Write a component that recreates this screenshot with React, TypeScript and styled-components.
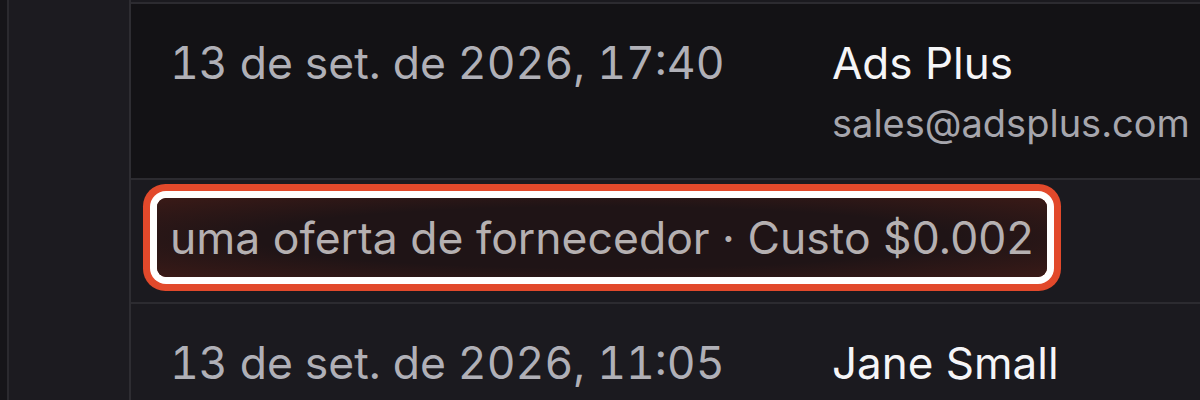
import * as React from "react";
import styled, { createGlobalStyle } from "styled-components";

const GlobalStyle = createGlobalStyle`
  html, body {
    margin: 0;
    padding: 0;
    background: #131215;
  }
  body {
    font-family: Inter, "Noto Sans", sans-serif;
    -webkit-font-smoothing: antialiased;
  }
`;

type Message = {
  date: string;
  name: string;
  email?: string;
  note?: string;
};

const messages: Message[] = [
  {
    date: "13 de set. de 2026, 17:40",
    name: "Ads Plus",
    email: "sales@adsplus.com",
    note: "uma oferta de fornecedor · Custo $0.002",
  },
  {
    date: "13 de set. de 2026, 11:05",
    name: "Jane Small",
  },
];

const App: React.FC = () => {
  return (
    <>
      <GlobalStyle />
      <Page>
        <Gutter />
        <Sidebar />
        <Table>
          {messages.map((m) => (
            <React.Fragment key={m.date}>
              <Row $dark={!!m.email}>
                <DateCell>{m.date}</DateCell>
                <SenderCell>
                  <Name>{m.name}</Name>
                  {m.email && <Email>{m.email}</Email>}
                </SenderCell>
              </Row>
              {m.note && (
                <NoteRow>
                  <Highlight>{m.note}</Highlight>
                </NoteRow>
              )}
            </React.Fragment>
          ))}
        </Table>
      </Page>
    </>
  );
};

const Page = styled.div`
  display: flex;
  width: 1200px;
  height: 400px;
  overflow: hidden;
  background: #1b1a1f;
`;

const Gutter = styled.div`
  width: 7px;
  flex-shrink: 0;
  background: #161519;
  border-right: 2px solid #2b2a2f;
`;

const Sidebar = styled.div`
  width: 120px;
  flex-shrink: 0;
  background: #1c1b20;
  border-right: 2px solid #2e2d32;
`;

const Table = styled.div`
  flex: 1;
  display: flex;
  flex-direction: column;
  padding-top: 2px;
`;

const Row = styled.div<{ $dark?: boolean }>`
  display: flex;
  flex-shrink: 0;
  border-top: 2px solid #2c2b30;
  background: ${(p) => (p.$dark ? "#131215" : "#1b1a1f")};
  padding: 31px 0 0 39px;
  height: 176px;
  box-sizing: border-box;
`;

const DateCell = styled.div`
  width: 662px;
  flex-shrink: 0;
  font-size: 44.5px;
  line-height: 56px;
  color: #b0b0b7;
  white-space: nowrap;
  font-variant-numeric: tabular-nums;
`;

const SenderCell = styled.div`
  display: flex;
  flex-direction: column;
  white-space: nowrap;
`;

const Name = styled.div`
  font-size: 44px;
  line-height: 56px;
  font-weight: 400;
  color: #f5f5f7;
`;

const Email = styled.div`
  margin-top: 9px;
  font-size: 38px;
  line-height: 46px;
  color: #a6a6ad;
`;

const NoteRow = styled.div`
  display: flex;
  align-items: flex-start;
  flex-shrink: 0;
  border-top: 2px solid #2c2b30;
  background: #1b1a1f;
  height: 124px;
  box-sizing: border-box;
  padding: 18px 0 0 26px;
`;

const Highlight = styled.div`
  padding: 0 13px;
  height: 79px;
  display: flex;
  align-items: center;
  font-size: 44.5px;
  color: #b5b0b1;
  border-radius: 9px;
  background: radial-gradient(
    ellipse at center,
    #1f1416 55%,
    #3a1a17 100%
  );
  box-shadow: 0 0 0 7px #ffffff, 0 0 0 14px #e2492b;
  white-space: nowrap;
`;

export default App;
